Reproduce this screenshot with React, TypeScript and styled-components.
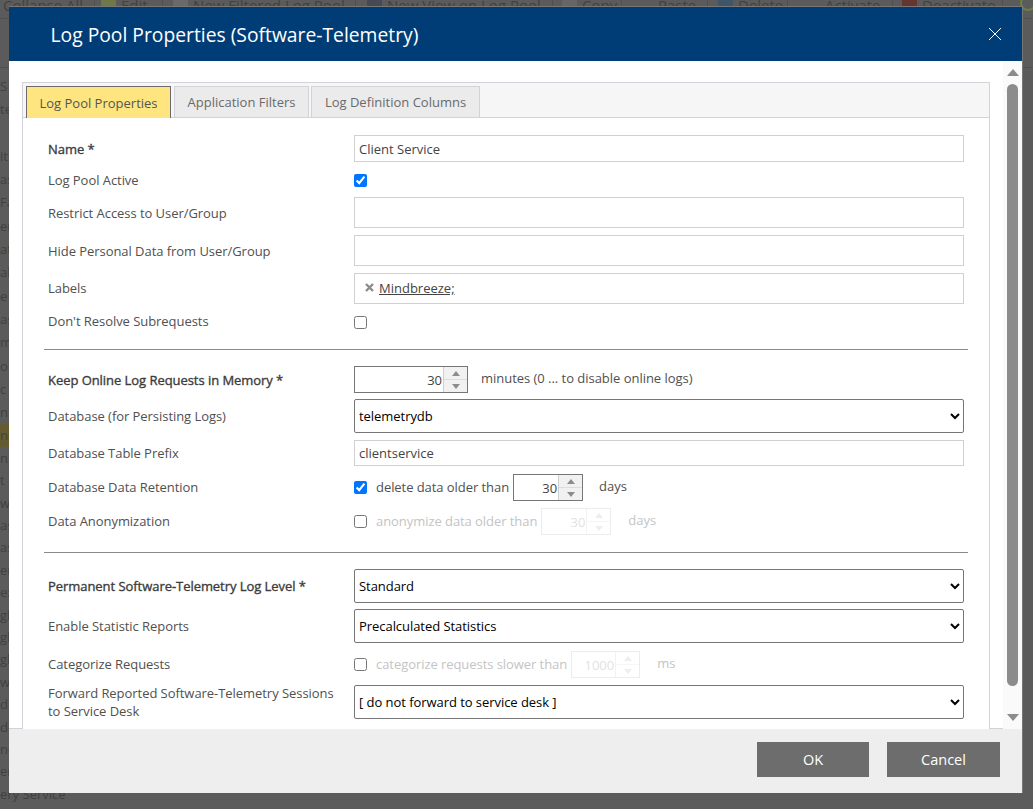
import React from "react";
import styled, { createGlobalStyle } from "styled-components";

const font = `"Open Sans", "Noto Sans", sans-serif`;

const Global = createGlobalStyle`
  html, body { margin: 0; padding: 0; height: 100%; overflow: hidden; }
  body { background: #5b5b5b; font-family: ${font}; font-size: 13px; }
  * { box-sizing: border-box; }
`;

/* ---------- dimmed page behind the dialog ---------- */
const Backdrop = styled.div`
  height: 809px;
  overflow: hidden;
  color: #414141;
  font-size: 15px;
`;
const Toolbar = styled.div`
  position: relative;
  display: flex;
  height: 19px;
  border-bottom: 1px solid #505050;
  overflow: hidden;
`;
const ToolItem = styled.div<{ $w: number; $pad: number }>`
  flex: 0 0 ${(p) => p.$w}px;
  padding-left: ${(p) => p.$pad}px;
  display: flex;
  align-items: flex-start;
  gap: 5px;
  height: 19px;
  line-height: 15px;
  margin-top: -2px;
  border-right: 1px solid #505050;
  white-space: nowrap;
`;
const ToolIcon = styled.span<{ $c: string }>`
  flex: 0 0 15px;
  height: 15px;
  margin-top: 1px;
  background: ${(p) => p.$c};
`;
const Crumb = styled.div`
  height: 49px;
  border-bottom: 1px solid #505050;
`;
const SideList = styled.div`
  padding-top: 7px;
  width: 300px;
`;
const SideRow = styled.div<{ $hl?: boolean; $h: number }>`
  height: ${(p) => p.$h}px;
  line-height: ${(p) => p.$h}px;
  font-size: 13px;
  white-space: nowrap;
  background: ${(p) => (p.$hl ? "#645c30" : "transparent")};
`;
const CornerIcon = styled.svg`
  position: absolute;
  top: -6px;
  right: -4px;
`;

/* ---------- dialog ---------- */
const Dialog = styled.div`
  position: absolute;
  left: 9px;
  top: 7px;
  width: 1013px;
  height: 786px;
  display: flex;
  flex-direction: column;
  background: #fff;
  box-shadow: 0 0 0 1px #777;
  clip-path: inset(-1px -1px 0 0);
`;
const Header = styled.header`
  flex: 0 0 54px;
  background: #003d76;
  display: flex;
  align-items: center;
  justify-content: space-between;
  padding: 0 20px 0 41.5px;
`;
const Title = styled.h1`
  margin: 0;
  font-size: 19.3px;
  font-weight: 400;
  color: #fff;
`;
const CloseButton = styled.button`
  width: 14px;
  height: 14px;
  padding: 0;
  border: 0;
  background: none;
  display: flex;
`;
const Body = styled.div`
  position: relative;
  flex: 1;
  min-height: 0;
  display: flex;
  overflow: hidden;
  &::after {
    content: "";
    position: absolute;
    left: 0;
    right: 0;
    bottom: 0;
    height: 1px;
    background: #d2d2d8;
  }
`;
const Scroller = styled.div`
  flex: 1;
  min-width: 0;
  padding: 21px 13px 0;
`;
const Panel = styled.section`
  position: relative;
  z-index: 1;
  height: 100%;
  border: 1px solid #d2d2d8;
  border-bottom: 0;
  background: #fff;
`;
const TabBar = styled.div`
  height: 35px;
  background: #f6f6f6;
  border-bottom: 1px solid #d2d2d8;
  padding: 3px 0 0 3px;
  display: flex;
  gap: 3px;
`;
const Tab = styled.div<{ $active?: boolean; $w: number; $ml?: number }>`
  width: ${(p) => p.$w}px;
  margin-left: ${(p) => p.$ml ?? 0}px;
  height: 32px;
  display: flex;
  align-items: center;
  justify-content: center;
  font-size: 13px;
  color: ${(p) => (p.$active ? "#555" : "#6a6a6a")};
  background: ${(p) => (p.$active ? "#ffe57f" : "#ebebeb")};
  border: 1px solid ${(p) => (p.$active ? "#6b6b6b" : "#d2d2d8")};
  border-bottom: ${(p) => (p.$active ? "0" : "1px solid #d2d2d8")};
`;
const Form = styled.div`
  padding: 17px 21px 0;
`;
const Row = styled.div<{ $h: number; $gap: number }>`
  display: grid;
  grid-template-columns: 306px 1fr;
  align-items: center;
  min-height: ${(p) => p.$h}px;
  margin-bottom: ${(p) => p.$gap}px;
  padding: 0 4px;
`;
const Label = styled.label<{ $bold?: boolean; $up?: boolean; $tall?: boolean }>`
  color: #505050;
  font-size: 13px;
  font-weight: 400;
  letter-spacing: -0.05px;
  line-height: 18px;
  margin-top: ${(p) => (p.$up ? "-2px" : p.$tall ? "-2px" : "0")};
  margin-bottom: ${(p) => (p.$tall ? "-2px" : "0")};
  ${(p) => (p.$bold ? "color: #3c3c3c; -webkit-text-stroke: 0.35px #3c3c3c;" : "")}
`;
const TextField = styled.input<{ $h?: number }>`
  width: 100%;
  height: ${(p) => p.$h ?? 27}px;
  border: 1px solid #d0d0d0;
  border-radius: 0;
  padding: 0 4px;
  font: 13px ${font};
  color: #444;
  background: #fff;
  outline: 0;
`;
const TagBox = styled.div`
  height: 31px;
  border: 1px solid #d0d0d0;
  display: flex;
  align-items: center;
  gap: 5px;
  padding: 0 0 2px 10px;
`;
const TagLink = styled.a`
  color: #444;
  text-decoration: underline;
  font-size: 13px;
`;
const Check = styled.input.attrs({ type: "checkbox" })`
  width: 13px;
  height: 13px;
  margin: 0;
  display: block;
  flex: none;
`;
const Line = styled.div`
  display: flex;
  align-items: center;
  color: #505050;
  font-size: 13px;
  white-space: nowrap;
`;
const CheckText = styled.span<{ $off?: boolean }>`
  margin: -2px 4px 0 9px;
  letter-spacing: -0.06px;
  color: ${(p) => (p.$off ? "#c4c4c4" : "#505050")};
`;
const Unit = styled.span<{ $off?: boolean; $ml: number; $raise?: number }>`
  margin-left: ${(p) => p.$ml}px;
  margin-top: ${(p) => p.$raise ?? -3}px;
  letter-spacing: -0.03px;
  color: ${(p) => (p.$off ? "#c4c4c4" : "#505050")};
`;
const Divider = styled.hr`
  margin: 0 0 16px;
  border: 0;
  border-top: 1px solid #8a8a8a;
`;
const Spin = styled.div<{ $w: number; $off?: boolean }>`
  width: ${(p) => p.$w}px;
  height: 27px;
  display: flex;
  border: 1px solid ${(p) => (p.$off ? "#ececec" : "#767676")};
  background: #fff;
  flex: none;
`;
const SpinValue = styled.input<{ $off?: boolean }>`
  flex: 1;
  min-width: 0;
  border: 0;
  padding: 1px 1px 0 0;
  text-align: right;
  font: 13px ${font};
  color: ${(p) => (p.$off ? "#e2e2e2" : "#444")};
  background: transparent;
  outline: 0;
`;
const Stepper = styled.div<{ $off?: boolean }>`
  flex: 0 0 24px;
  display: flex;
  flex-direction: column;
  background: ${(p) => (p.$off ? "#fff" : "#f1f1f1")};
  border-left: 1px solid ${(p) => (p.$off ? "#f2f2f2" : "#cfcfcf")};
`;
const StepBtn = styled.div<{ $down?: boolean; $off?: boolean }>`
  flex: 1;
  display: flex;
  align-items: center;
  justify-content: center;
  border-top: ${(p) => (p.$down ? `1px solid ${p.$off ? "#f6f6f6" : "#dcdcdc"}` : "0")};
  &::before {
    content: "";
    border-left: 4.5px solid transparent;
    border-right: 4.5px solid transparent;
    ${(p) => (p.$down ? "border-top" : "border-bottom")}: 5px solid ${(p) =>
      p.$off ? "#eeeeee" : "#8c8c8c"};
  }
`;
const Select = styled.select`
  width: 100%;
  height: 34px;
  border: 1px solid #767676;
  border-radius: 2px;
  background-color: #fff;
  padding: 0;
  font: 13px ${font};
  letter-spacing: -0.05px;
  color: #000;
  outline: 0;
`;
const Track = styled.div`
  position: relative;
  z-index: 1;
  flex: 0 0 19px;
  background: #fafafa;
  display: flex;
  flex-direction: column;
  align-items: center;
  padding-top: 8px;
`;
const Arrow = styled.div<{ $down?: boolean }>`
  border-left: 6.5px solid transparent;
  border-right: 6.5px solid transparent;
  ${(p) => (p.$down ? "border-top" : "border-bottom")}: 7px solid #8c8c8c;
`;
const Thumb = styled.div`
  width: 11px;
  height: 602px;
  margin: 8px 0 28px;
  border-radius: 6px;
  background: #8c8c8c;
`;
const Footer = styled.footer`
  flex: 0 0 64px;
  background: #eeeeee;
  display: flex;
  justify-content: flex-end;
  gap: 18px;
  padding: 13px 22px 0 0;
`;
const Button = styled.button<{ $w: number }>`
  width: ${(p) => p.$w}px;
  height: 35px;
  border: 0;
  background: #6d6d6d;
  color: #fff;
  font: 14.5px ${font};
`;

const noop = () => {};

const Spinner = ({ value, w, off }: { value: string; w: number; off?: boolean }) => (
  <Spin $w={w} $off={off}>
    <SpinValue value={value} readOnly $off={off} />
    <Stepper $off={off}>
      <StepBtn $off={off} />
      <StepBtn $down $off={off} />
    </Stepper>
  </Spin>
);

const tools = [
  { label: "Collapse All", w: 95, pad: 3 },
  { label: "Edit", w: 68, pad: 6, icon: "#6d7a45" },
  { label: "New Filtered Log Pool", w: 193, pad: 10, icon: "#6a6a6a" },
  { label: "New View on Log Pool", w: 197, pad: 11, icon: "#454a55" },
  { label: "Copy", w: 69, pad: 9, icon: "#666" },
  { label: "Paste", w: 86, pad: 36 },
  { label: "Delete", w: 80, pad: 10, icon: "#3f5568" },
  { label: "Activate", w: 105, pad: 37 },
  { label: "Deactivate", w: 110, pad: 9, icon: "#66352f" },
];

const sideTop = ["S", "te", "", "it", "as", "Fa", "er", "at", "al", "e l", "as", "m", "o", "c", "n"];
const sideBottom = [
  "n", "n", "t", "w", "as", "as", "er", "ex", "gl", "gl", "gl", "w", "di", "di", "nc", "er",
  "ery Service",
];

export default function App() {
  return (
    <>
      <Global />
      <Backdrop>
        <Toolbar>
          {tools.map((t) => (
            <ToolItem key={t.label} $w={t.w} $pad={t.pad}>
              {t.icon && <ToolIcon $c={t.icon} />}
              {t.label}
            </ToolItem>
          ))}
          <CornerIcon width="18" height="18" viewBox="0 0 18 18" aria-hidden="true">
            <circle cx="9" cy="9" r="7" fill="none" stroke="#6b8242" strokeWidth="2" />
          </CornerIcon>
        </Toolbar>
        <Crumb />
        <SideList>
          {sideTop.map((s, i) => (
            <SideRow key={i} $h={23.3}>
              {s}
            </SideRow>
          ))}
          {sideBottom.map((s, i) => (
            <SideRow key={i} $h={22.4} $hl={i === 0}>
              {s}
            </SideRow>
          ))}
        </SideList>
      </Backdrop>

      <Dialog>
        <Header>
          <Title>Log Pool Properties (Software-Telemetry)</Title>
          <CloseButton aria-label="Close">
            <svg width="14" height="14" viewBox="0 0 14 14" aria-hidden="true">
              <path d="M1 1 L13 13 M13 1 L1 13" stroke="#fff" strokeWidth="1" fill="none" />
            </svg>
          </CloseButton>
        </Header>
        <Body>
          <Scroller>
            <Panel>
              <TabBar>
                <Tab $active $w={145}>Log Pool Properties</Tab>
                <Tab $w={135}>Application Filters</Tab>
                <Tab $w={169} $ml={-1}>Log Definition Columns</Tab>
              </TabBar>
              <Form>
                <Row $h={27} $gap={8}>
                  <Label $bold>Name *</Label>
                  <TextField value="Client Service" readOnly />
                </Row>
                <Row $h={20} $gap={7}>
                  <Label>Log Pool Active</Label>
                  <Check checked onChange={noop} />
                </Row>
                <Row $h={31} $gap={7}>
                  <Label>Restrict Access to User/Group</Label>
                  <TextField $h={31} readOnly />
                </Row>
                <Row $h={31} $gap={7}>
                  <Label>Hide Personal Data from User/Group</Label>
                  <TextField $h={31} readOnly />
                </Row>
                <Row $h={31} $gap={8}>
                  <Label $up>Labels</Label>
                  <TagBox>
                    <svg width="9" height="9" viewBox="0 0 9 9" aria-hidden="true">
                      <path d="M1 1 L8 8 M8 1 L1 8" stroke="#8c8c8c" strokeWidth="2.4" fill="none" />
                    </svg>
                    <TagLink>Mindbreeze;</TagLink>
                  </TagBox>
                </Row>
                <Row $h={20} $gap={17}>
                  <Label $up>Don't Resolve Subrequests</Label>
                  <Check onChange={noop} />
                </Row>
                <Divider />
                <Row $h={27} $gap={6}>
                  <Label $bold>Keep Online Log Requests in Memory *</Label>
                  <Line>
                    <Spinner value="30" w={114} />
                    <Unit $ml={13} $raise={-4}>minutes (0 ... to disable online logs)</Unit>
                  </Line>
                </Row>
                <Row $h={34} $gap={7}>
                  <Label>Database (for Persisting Logs)</Label>
                  <Select defaultValue="telemetrydb">
                    <option>telemetrydb</option>
                  </Select>
                </Row>
                <Row $h={26} $gap={8}>
                  <Label>Database Table Prefix</Label>
                  <TextField $h={26} value="clientservice" readOnly />
                </Row>
                <Row $h={27} $gap={7}>
                  <Label $up>Database Data Retention</Label>
                  <Line>
                    <Check checked onChange={noop} />
                    <CheckText>delete data older than</CheckText>
                    <Spinner value="30" w={70} />
                    <Unit $ml={16}>days</Unit>
                  </Line>
                </Row>
                <Row $h={27} $gap={17}>
                  <Label $up>Data Anonymization</Label>
                  <Line>
                    <Check onChange={noop} />
                    <CheckText $off>anonymize data older than</CheckText>
                    <Spinner value="30" w={70} off />
                    <Unit $off $ml={17}>days</Unit>
                  </Line>
                </Row>
                <Divider />
                <Row $h={34} $gap={6}>
                  <Label $bold>Permanent Software-Telemetry Log Level *</Label>
                  <Select defaultValue="Standard">
                    <option>Standard</option>
                  </Select>
                </Row>
                <Row $h={34} $gap={8}>
                  <Label>Enable Statistic Reports</Label>
                  <Select defaultValue="Precalculated Statistics">
                    <option>Precalculated Statistics</option>
                  </Select>
                </Row>
                <Row $h={27} $gap={7}>
                  <Label $up>Categorize Requests</Label>
                  <Line>
                    <Check onChange={noop} />
                    <CheckText $off>categorize requests slower than</CheckText>
                    <Spinner value="1000" w={69} off />
                    <Unit $off $ml={17}>ms</Unit>
                  </Line>
                </Row>
                <Row $h={34} $gap={0}>
                  <Label $tall>
                    Forward Reported Software-Telemetry Sessions
                    <br />
                    to Service Desk
                  </Label>
                  <Select defaultValue="none">
                    <option value="none">[ do not forward to service desk ]</option>
                  </Select>
                </Row>
              </Form>
            </Panel>
          </Scroller>
          <Track>
            <Arrow />
            <Thumb />
            <Arrow $down />
          </Track>
        </Body>
        <Footer>
          <Button $w={112}>OK</Button>
          <Button $w={113}>Cancel</Button>
        </Footer>
      </Dialog>
    </>
  );
}
